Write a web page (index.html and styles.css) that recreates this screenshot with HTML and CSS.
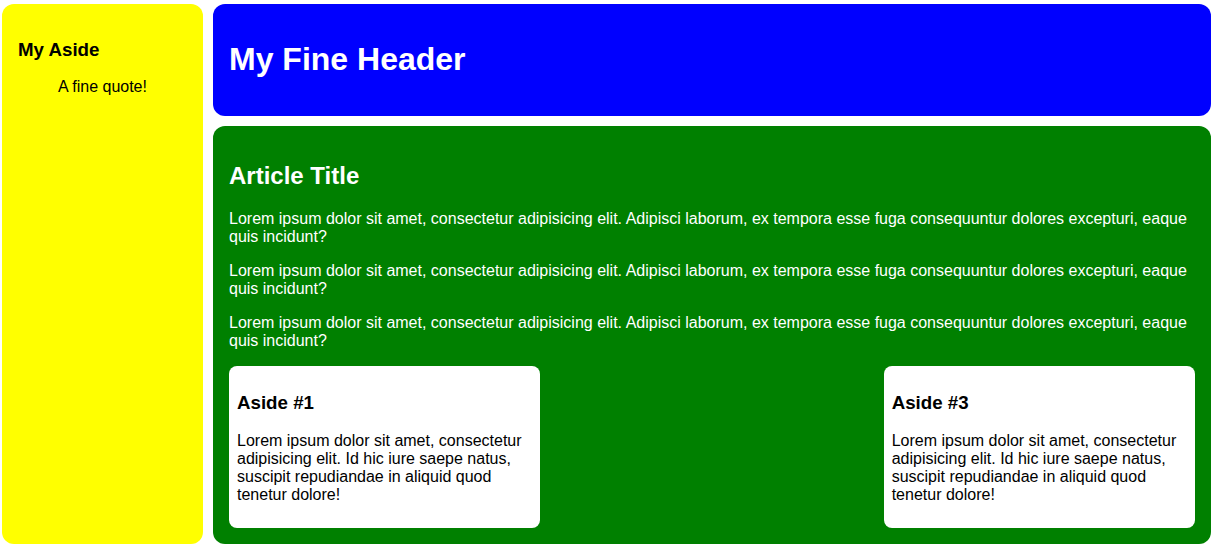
FILE: index.html
```html
<!DOCTYPE html>
<html lang="en">
<head>
<meta charset="utf-8">
<title>My Fine Header</title>
<link rel="stylesheet" href="styles.css">
</head>
<body>
<div class="page">
  <aside class="side">
    <h3 class="side-title">My Aside</h3>
    <blockquote class="quote">A fine quote!</blockquote>
  </aside>
  <header class="header">
    <h1 class="header-title">My Fine Header</h1>
  </header>
  <main class="main">
    <h2 class="article-title">Article Title</h2>
    <p class="text">Lorem ipsum dolor sit amet, consectetur adipisicing elit. Adipisci laborum, ex tempora esse fuga consequuntur dolores excepturi, eaque quis incidunt?</p>
    <p class="text">Lorem ipsum dolor sit amet, consectetur adipisicing elit. Adipisci laborum, ex tempora esse fuga consequuntur dolores excepturi, eaque quis incidunt?</p>
    <p class="text">Lorem ipsum dolor sit amet, consectetur adipisicing elit. Adipisci laborum, ex tempora esse fuga consequuntur dolores excepturi, eaque quis incidunt?</p>
    <div class="cards">
      <section class="card">
        <h3 class="card-title">Aside #1</h3>
        <p class="card-text">Lorem ipsum dolor sit amet, consectetur adipisicing elit. Id hic iure saepe natus, suscipit repudiandae in aliquid quod tenetur dolore!</p>
      </section>
      <section class="card card-third">
        <h3 class="card-title">Aside #3</h3>
        <p class="card-text">Lorem ipsum dolor sit amet, consectetur adipisicing elit. Id hic iure saepe natus, suscipit repudiandae in aliquid quod tenetur dolore!</p>
      </section>
    </div>
  </main>
</div>
</body>
</html>
```

FILE: styles.css
```css
html, body {
  margin: 0;
  padding: 0;
  background: #fff;
}

body {
  font-family: "Liberation Sans", Arial, sans-serif;
  font-size: 16px;
  line-height: 18px;
  color: #000;
}

.page {
  display: grid;
  grid-template-columns: 201px 1fr;
  grid-template-rows: auto auto;
  column-gap: 10px;
  row-gap: 10px;
  padding: 4px 6px 5px 2px;
  align-items: start;
}

.side {
  grid-column: 1;
  grid-row: 1 / span 2;
  align-self: stretch;
  background: #ffff00;
  border-radius: 12px;
  padding: 16px;
}

.side-title {
  font-size: 18.72px;
  line-height: 21px;
  font-weight: bold;
  margin: 18.72px 0;
}

.quote {
  margin: 16px 40px;
}

.header {
  grid-column: 2;
  grid-row: 1;
  background: #0000ff;
  color: #fff;
  border-radius: 12px;
  padding: 16px;
}

.header-title {
  font-size: 32px;
  line-height: 37px;
  font-weight: bold;
  margin: 21.44px 0;
}

.main {
  grid-column: 2;
  grid-row: 2;
  background: #008000;
  color: #fff;
  border-radius: 12px;
  padding: 16px;
}

.article-title {
  font-size: 24px;
  line-height: 28px;
  font-weight: bold;
  margin: 19.92px 0;
}

.text {
  margin: 16px 0;
}

.cards {
  display: grid;
  grid-template-columns: repeat(3, 1fr);
  column-gap: 16px;
}

.card {
  grid-column: 1;
  background: #fff;
  color: #000;
  border-radius: 8px;
  padding: 8px;
}

.card-third {
  grid-column: 3;
}

.card-title {
  font-size: 18.72px;
  line-height: 21px;
  font-weight: bold;
  margin: 18.72px 0;
}

.card-text {
  margin: 16px 0;
}
```
